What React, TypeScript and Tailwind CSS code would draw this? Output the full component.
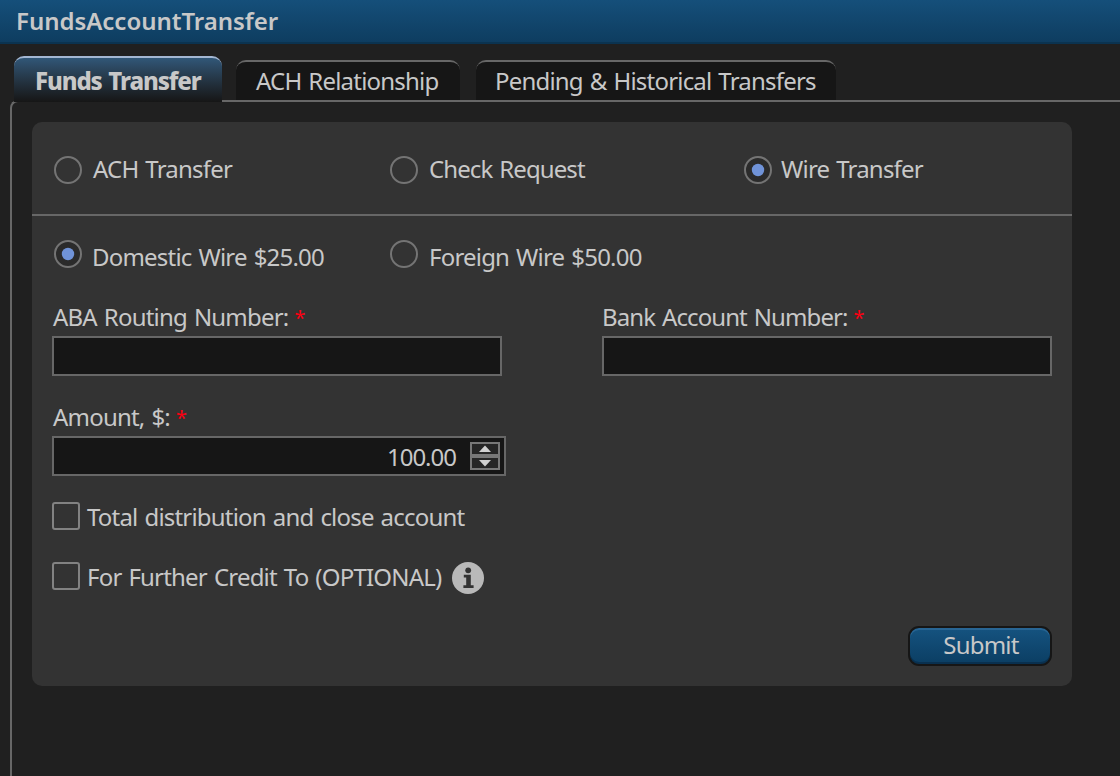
import React from "react";

function Radio({ checked = false }: { checked?: boolean }) {
  return (
    <svg width="28" height="28" viewBox="0 0 28 28" className="shrink-0" aria-hidden="true">
      <circle cx="14" cy="14" r="13" fill={checked ? "#2b2b2b" : "none"} stroke="#747474" strokeWidth="2" />
      {checked && <circle cx="14" cy="14" r="6.2" fill="#7093d8" />}
    </svg>
  );
}

function Checkbox() {
  return <span className="block h-7 w-7 shrink-0 rounded-[3px] border-2 border-[#828282]" />;
}

function Required() {
  return <span className="relative -top-[1px] ml-[6px] text-[20px] leading-none tracking-normal text-[#fb0012]">*</span>;
}

function Spinner() {
  return (
    <svg width="30" height="28" viewBox="0 0 30 28" className="shrink-0" aria-hidden="true">
      <rect x="1" y="1" width="28" height="26" fill="#252525" stroke="#777" strokeWidth="2" />
      <rect x="2" y="12" width="26" height="4" fill="#777" />
      <path d="M15 3.5 L21 10 H9 Z" fill="#d0d0d0" />
      <path d="M15 24.5 L21 18 H9 Z" fill="#d0d0d0" />
    </svg>
  );
}

function InfoIcon() {
  return (
    <svg width="32" height="32" viewBox="0 0 32 32" className="shrink-0" aria-hidden="true">
      <circle cx="16" cy="16" r="16" fill="#b9b9b9" />
      <circle cx="16.2" cy="8.3" r="2.9" fill="#333" />
      <path d="M11.8 12.8 H18.8 V23.2 H21.6 V26 H11.4 V23.2 H14.2 V15.6 H11.8 Z" fill="#333" />
    </svg>
  );
}

export default function App() {
  return (
    <div className="flex h-[776px] w-[1120px] flex-col overflow-hidden bg-[#202020] font-['Noto_Sans',sans-serif] text-[24px] leading-8 tracking-[-0.8px] whitespace-nowrap text-[#c8c8c8] [word-spacing:1.5px]">
      <header className="h-11 shrink-0 border-b-2 border-[#0b3350] bg-linear-to-b from-[#154f7a] to-[#0e3d60] pt-[5px] pl-4">
        <h1 className="text-[24px] leading-8 font-semibold tracking-[-0.03px]">FundsAccountTransfer</h1>
      </header>

      <nav className="z-10 flex h-[58px] shrink-0 items-end pl-[14px]">
        <div className="mr-[14px] h-[46px] w-[208px] rounded-t-[10px] border-t-2 border-[#a3b7d3] bg-linear-to-b from-[#315778] to-[#161616] pt-[7px] pl-[21px] font-extrabold tracking-[-1.1px]">
          Funds Transfer
        </div>
        <div className="mr-4 mb-[2px] h-10 w-[224px] rounded-t-[10px] border-t-2 border-[#676767] bg-[#161616] pt-[3px] pl-5">
          ACH Relationship
        </div>
        <div className="mb-[2px] h-10 w-[360px] rounded-t-[10px] border-t-2 border-[#676767] bg-[#161616] pt-[3px] pl-[19px]">
          Pending &amp; Historical Transfers
        </div>
      </nav>

      <main className="-mt-[2px] ml-[10px] grow rounded-tl-[8px] border-t-2 border-l-2 border-[#676767] pt-5 pl-5">
        <form className="h-[564px] w-[1040px] rounded-[10px] bg-[#333333]">
          <div className="flex h-[94px] items-start border-b-2 border-[#676767] pt-[31px] pl-[22px]">
            <label className="flex w-[336px] items-start gap-[11px]">
              <span className="pt-[3px]"><Radio /></span>
              <span>ACH Transfer</span>
            </label>
            <label className="flex w-[354px] items-start gap-[11px]">
              <span className="pt-[3px]"><Radio /></span>
              <span className="tracking-[-0.9px]">Check Request</span>
            </label>
            <label className="flex items-start gap-[9px]">
              <span className="pt-[3px]"><Radio checked /></span>
              <span>Wire Transfer</span>
            </label>
          </div>
          <div className="flex h-[84px] items-start pt-[24px] pl-[22px]">
            <label className="flex w-[336px] items-start gap-[10px]">
              <Radio checked />
              <span className="pt-[1px]">Domestic Wire $25.00</span>
            </label>
            <label className="flex items-start gap-[11px]">
              <Radio />
              <span className="pt-[1px]">Foreign Wire $50.00</span>
            </label>
          </div>
          <div className="flex gap-[100px] pl-5">
            <div className="h-[100px] w-[450px]">
              <div className="h-9 pt-[1px] pl-px"><span>ABA Routing Number:</span><Required /></div>
              <div className="h-10 border-2 border-[#676767] bg-[#161616]" />
            </div>
            <div className="h-[100px] w-[450px]">
              <div className="h-9 pt-[1px]"><span className="tracking-[-0.9px]">Bank Account Number:</span><Required /></div>
              <div className="h-10 border-2 border-[#676767] bg-[#161616]" />
            </div>
          </div>
          <div className="h-[102px] w-[474px] pl-5">
            <div className="h-9 pt-[1px] pl-px"><span>Amount, $:</span><Required /></div>
            <div className="flex h-10 items-start justify-end gap-[14px] border-2 border-[#676767] bg-[#161616] pt-1 pr-1">
              <span className="-mt-[1px] tracking-[-1px]">100.00</span>
              <Spinner />
            </div>
          </div>
          <label className="flex h-[60px] items-start gap-[7px] pl-5">
            <Checkbox />
            <span className="-mt-[1px]">Total distribution and close account</span>
          </label>
          <div className="flex h-[64px] items-start pl-5">
            <Checkbox />
            <span className="-mt-[1px] ml-[7px] w-[365px]">For Further Credit To (OPTIONAL)</span>
            <InfoIcon />
          </div>
          <div className="flex justify-end pr-5">
            <button type="button" className="h-10 w-36 rounded-[11px] border-2 border-[#161616] bg-linear-to-b from-[#155380] to-[#0b3e63] pb-[3px] pl-[2px] text-center leading-8 shadow-[inset_0_2px_0_#286594,inset_0_-2px_0_#09304f]">
              Submit
            </button>
          </div>
        </form>
      </main>
    </div>
  );
}
